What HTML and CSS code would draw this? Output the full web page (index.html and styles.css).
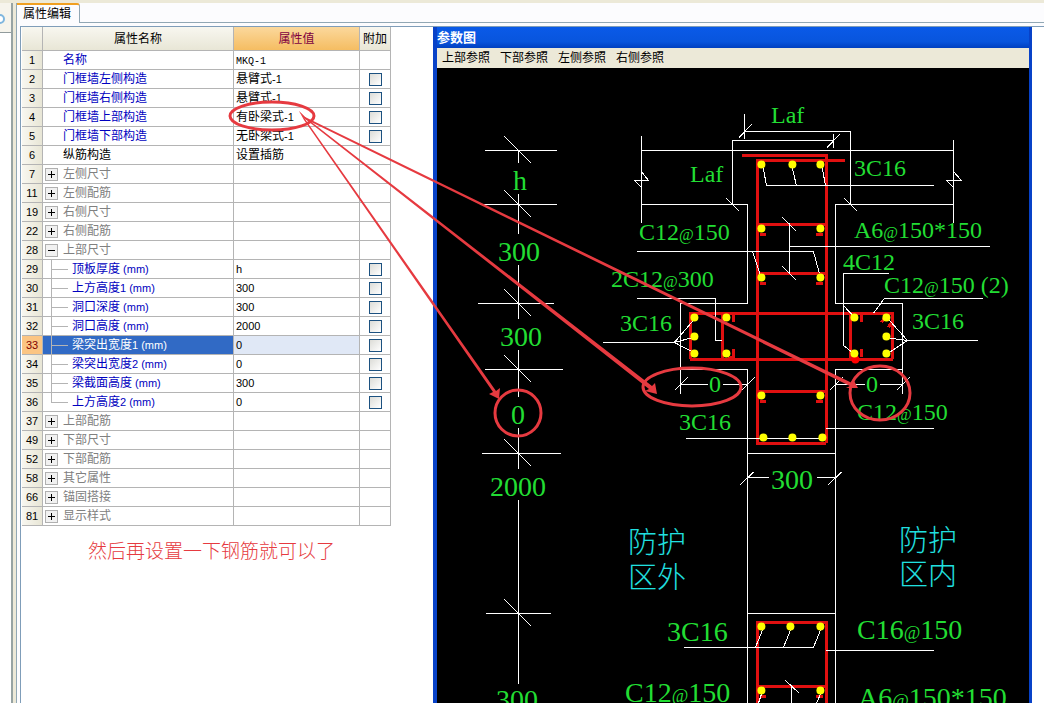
FILE: index.html
```html
<!DOCTYPE html>
<html lang="zh-CN">
<head>
<meta charset="utf-8">
<title>属性编辑</title>
<link rel="stylesheet" href="styles.css">
</head>
<body>
<div class="app">
  <aside class="dock"><div class="dock-bar"><svg class="dock-icon" width="6" height="16" viewBox="0 0 6 16"><circle cx="0" cy="8" r="4" fill="#fff" stroke="#7fb6de" stroke-width="2"/></svg></div></aside>
  <main class="main">
    <nav class="tabs"><button class="tab" type="button">属性编辑</button></nav>
    <div class="work">
      <section class="props">
        <table class="grid">
          <colgroup><col class="c-no"><col class="c-name"><col class="c-value"><col class="c-extra"></colgroup>
          <thead><tr><th></th><th>属性名称</th><th class="active">属性值</th><th>附加</th></tr></thead>
          <tbody>
            <tr><th>1</th><td class="name">名称</td><td><span class="mono">MKQ-1</span></td><td></td></tr>
            <tr><th>2</th><td class="name">门框墙左侧构造</td><td>悬臂式<small>-1</small></td><td><input type="checkbox" aria-label="门框墙左侧构造 附加"></td></tr>
            <tr><th>3</th><td class="name">门框墙右侧构造</td><td>悬臂式<small>-1</small></td><td><input type="checkbox" aria-label="门框墙右侧构造 附加"></td></tr>
            <tr><th>4</th><td class="name">门框墙上部构造</td><td>有卧梁式<small>-1</small></td><td><input type="checkbox" aria-label="门框墙上部构造 附加"></td></tr>
            <tr><th>5</th><td class="name">门框墙下部构造</td><td>无卧梁式<small>-1</small></td><td><input type="checkbox" aria-label="门框墙下部构造 附加"></td></tr>
            <tr><th>6</th><td class="name plain">纵筋构造</td><td>设置插筋</td><td></td></tr>
            <tr><th>7</th><td class="group"><div><button type="button" class="fold" aria-label="展开"></button>左侧尺寸</div></td><td></td><td></td></tr>
            <tr><th>11</th><td class="group"><div><button type="button" class="fold" aria-label="展开"></button>左侧配筋</div></td><td></td><td></td></tr>
            <tr><th>19</th><td class="group"><div><button type="button" class="fold" aria-label="展开"></button>右侧尺寸</div></td><td></td><td></td></tr>
            <tr><th>22</th><td class="group"><div><button type="button" class="fold" aria-label="展开"></button>右侧配筋</div></td><td></td><td></td></tr>
            <tr><th>28</th><td class="group"><div><button type="button" class="fold open" aria-label="收起"></button>上部尺寸</div></td><td></td><td></td></tr>
            <tr><th>29</th><td class="child"><div><i class="branch"></i>顶板厚度<small>&nbsp;(mm)</small></div></td><td><small>h</small></td><td><input type="checkbox" aria-label="顶板厚度 附加"></td></tr>
            <tr><th>30</th><td class="child"><div><i class="branch"></i>上方高度<small>1&nbsp;(mm)</small></div></td><td><small>300</small></td><td><input type="checkbox" aria-label="上方高度1 附加"></td></tr>
            <tr><th>31</th><td class="child"><div><i class="branch"></i>洞口深度<small>&nbsp;(mm)</small></div></td><td><small>300</small></td><td><input type="checkbox" aria-label="洞口深度 附加"></td></tr>
            <tr><th>32</th><td class="child"><div><i class="branch"></i>洞口高度<small>&nbsp;(mm)</small></div></td><td><small>2000</small></td><td><input type="checkbox" aria-label="洞口高度 附加"></td></tr>
            <tr class="selected"><th>33</th><td class="child"><div><i class="branch"></i>梁突出宽度<small>1&nbsp;(mm)</small></div></td><td><small>0</small></td><td><input type="checkbox" aria-label="梁突出宽度1 附加"></td></tr>
            <tr><th>34</th><td class="child"><div><i class="branch"></i>梁突出宽度<small>2&nbsp;(mm)</small></div></td><td><small>0</small></td><td><input type="checkbox" aria-label="梁突出宽度2 附加"></td></tr>
            <tr><th>35</th><td class="child"><div><i class="branch"></i>梁截面高度<small>&nbsp;(mm)</small></div></td><td><small>300</small></td><td><input type="checkbox" aria-label="梁截面高度 附加"></td></tr>
            <tr><th>36</th><td class="child"><div><i class="branch last"></i>上方高度<small>2&nbsp;(mm)</small></div></td><td><small>0</small></td><td><input type="checkbox" aria-label="上方高度2 附加"></td></tr>
            <tr><th>37</th><td class="group"><div><button type="button" class="fold" aria-label="展开"></button>上部配筋</div></td><td></td><td></td></tr>
            <tr><th>49</th><td class="group"><div><button type="button" class="fold" aria-label="展开"></button>下部尺寸</div></td><td></td><td></td></tr>
            <tr><th>52</th><td class="group"><div><button type="button" class="fold" aria-label="展开"></button>下部配筋</div></td><td></td><td></td></tr>
            <tr><th>58</th><td class="group"><div><button type="button" class="fold" aria-label="展开"></button>其它属性</div></td><td></td><td></td></tr>
            <tr><th>66</th><td class="group"><div><button type="button" class="fold" aria-label="展开"></button>锚固搭接</div></td><td></td><td></td></tr>
            <tr><th>81</th><td class="group"><div><button type="button" class="fold" aria-label="展开"></button>显示样式</div></td><td></td><td></td></tr>
          </tbody>
        </table>
        <p class="note">然后再设置一下钢筋就可以了</p>
      </section>
      <section class="dialog">
        <h1 class="dialog-title">参数图</h1>
        <div class="menu"><button type="button">上部参照</button><button type="button">下部参照</button><button type="button">左侧参照</button><button type="button">右侧参照</button></div>
        <div class="canvas">
          <svg width="592" height="635" viewBox="437 68 592 635">
            <g transform="translate(.4 .4)">
            <g class="bar">
              <path d="M742 155H827M758 160H845M757 159V443M826 154V443M756 443H826M757 224H826M757 273H826M757 391H826"/>
              <path d="M760 234H766M816 234H823M760 283H766M816 283H823M760 401H766M816 401H823"/>
              <path d="M690 313H893M690 359H893M690 312V359M892 312V359M722 313V359M850 313V359"/>
              <path d="M733 315V322M733 349V357L728 358M861 315V322M861 349V357M881 322L884 318M888 327L891 322"/>
              <path d="M756 622H828M757 622V703M826 622V703M757 686H826M760 696H766M816 696H823"/>
            </g>
            <circle cx="855" cy="359" r="4" fill="#ff0000"/>
            <g class="line">
              <path d="M485 150H557M518 150V163M504 136L531 163M480 204H557M518 194V234M504 190L531 217M478 303H554M518 265V319M504 289L531 316M485 369H563M518 350V397M504 355L531 382M482 453H561M518 428V469M504 439L531 466M486 613H551M518 500V684M504 599L531 626"/>
              <path d="M641 136V223M641 150H953M641 171L648 180H634L641 187M641 204H747V303H680V394M680 369H747V703M953 140V223M953 171L961 180H946L953 187M953 204H835V303H902V394M902 369H835V703M747 453H835M747 613H835"/>
              <path d="M744 114V139M744 131H850V204M738 138L751 124M844 198L857 211M732 204V140H833M726 198L739 211M833 134V148M826 148L839 134"/>
              <path d="M763 168L766 185H934M792 168L796 185M822 168L825 185M789 246H990M789 223V273M782 217L796 231M782 266L796 280M637 251H813L819 273M752 251L760 275M637 298H715V340H722"/>
              <path d="M603 342H674L693 320M674 342L693 337M674 342L693 352M680 384H708M723 384H748M674 390L687 377M741 390L754 377M686 438H822"/>
              <path d="M889 273H843V345L852 352M843 305L854 317M983 298H884L873 313M978 340H907L889 320M907 340L890 338M907 340L889 352M836 384H865M880 384H902M829 390L842 377M896 390L909 377M826 428H934"/>
              <path d="M747 477H769M817 477H835M740 484L754 471M828 484L842 471M684 647H813L820 630M762 630L755 647M790 630L783 647M826 650H934M785 680L799 693M791 686V703M761 694L758 703M820 694L816 703"/>
            </g>
            <g class="dot">
              <circle cx="761" cy="164" r="4"/><circle cx="792" cy="164" r="4"/><circle cx="820" cy="164" r="4"/>
              <circle cx="761" cy="228" r="4"/><circle cx="820" cy="228" r="4"/><circle cx="761" cy="277" r="4"/><circle cx="820" cy="277" r="4"/>
              <circle cx="761" cy="395" r="4"/><circle cx="820" cy="395" r="4"/><circle cx="763" cy="437" r="4"/><circle cx="792" cy="437" r="4"/><circle cx="822" cy="437" r="4"/>
              <circle cx="694" cy="317" r="4"/><circle cx="694" cy="336" r="4"/><circle cx="694" cy="353" r="4"/><circle cx="726" cy="317" r="4"/><circle cx="726" cy="353" r="4"/>
              <circle cx="854" cy="317" r="4"/><circle cx="854" cy="353" r="4"/><circle cx="886" cy="317" r="4"/><circle cx="886" cy="336" r="4"/><circle cx="886" cy="353" r="4"/>
              <circle cx="761" cy="626" r="4"/><circle cx="790" cy="626" r="4"/><circle cx="820" cy="626" r="4"/><circle cx="761" cy="690" r="4"/><circle cx="820" cy="690" r="4"/>
            </g>
            </g>
            <g class="label">
              <text x="771" y="123">Laf</text><text x="690" y="182">Laf</text><text x="854" y="176">3C16</text>
              <text x="639" y="240">C12<tspan class="at">@</tspan>150</text><text x="854" y="238">A6<tspan class="at">@</tspan>150*150</text>
              <text x="843" y="270">4C12</text><text x="611" y="287">2C12<tspan class="at">@</tspan>300</text><text x="884" y="293">C12<tspan class="at">@</tspan>150 (2)</text>
              <text x="620" y="331">3C16</text><text x="912" y="329">3C16</text><text x="709" y="392">0</text><text x="866" y="392">0</text>
              <text x="679" y="430">3C16</text><text x="857" y="420">C12<tspan class="at">@</tspan>150</text>
            </g>
            <g class="label large">
              <text x="513" y="190">h</text><text x="498" y="261">300</text><text x="500" y="346">300</text><text x="511" y="424">0</text><text x="490" y="496">2000</text><text x="771" y="489">300</text><text x="496" y="709">300</text>
              <text x="667" y="641">3C16</text><text x="857" y="639">C16<tspan class="at">@</tspan>150</text><text x="625" y="702">C12<tspan class="at">@</tspan>150</text><text x="858" y="707">A6<tspan class="at">@</tspan>150*150</text>
            </g>
            <g class="zone"><text x="628" y="553">防护</text><text x="628" y="588">区外</text><text x="899" y="551">防护</text><text x="899" y="585">区内</text></g>
          </svg>
        </div>
      </section>
    </div>
  </main>
</div>
<svg class="markup" width="1044" height="703" viewBox="0 0 1044 703" aria-hidden="true">
  <g fill="none" stroke="#e63a40" stroke-width="3">
    <ellipse cx="272" cy="116" rx="42" ry="14"/>
    <circle cx="518" cy="413" r="23"/>
    <ellipse cx="692" cy="387" rx="49" ry="19"/>
    <ellipse cx="880" cy="393" rx="30" ry="27"/>
  </g>
  <g fill="#e63a40">
    <path d="M299 111L305 119L496 391L500 388L499 399L489 394L493 392L304 120Z"/>
    <path d="M299 111L305 117L652 386L655 383L657 394L645 391L649 389L304 118Z"/>
    <path d="M299 111L305 117L852 383L853 379L858 388L846 388L850 386L305 119Z"/>
  </g>
</svg>
</body>
</html>
```

FILE: styles.css
```css
* { box-sizing: border-box; }
body {
  margin: 0;
  height: 100vh;
  overflow: hidden;
  background: #ece9d8;
  color: #000;
  font: 12px/18px "Liberation Sans", "Noto Sans CJK SC", sans-serif;
}
button { border: 0; padding: 0; background: none; font: inherit; color: inherit; }
.app { display: flex; height: 100%; padding-top: 3px; }
.dock { width: 13px; border-right: 2px solid #97a3a3; background: #fff; }
.dock-bar { height: 30px; border-bottom: 1px solid #919b9c; background: #f6f4ec; }
.dock-icon { display: block; height: 32px; }
.main {
  flex: 1;
  min-width: 0;
  display: flex;
  flex-direction: column;
  margin-left: 3px;
  border-left: 1px solid #91a7b4;
  background: #fcfcfe;
}
.tabs { height: 20px; border-bottom: 1px solid #91a7b4; }
.tab {
  display: block;
  width: 63px;
  height: 20px;
  padding-left: 6px;
  border-top: 2px solid #f0a020;
  border-right: 1px solid #91a7b4;
  border-radius: 0 3px 0 0;
  background: #fcfcfe;
  line-height: 17px;
  text-align: left;
}
.work {
  flex: 1;
  min-height: 0;
  display: flex;
  justify-content: space-between;
  margin: 3px 0 0 3px;
  border: solid #7f9db9;
  border-width: 1px 0 0 1px;
  background: #fff;
}
.props { width: 370px; padding-left: 1px; }
.grid { width: 369px; table-layout: fixed; border-collapse: separate; border-spacing: 0; }
.c-no { width: 21px; }
.c-name { width: 191px; }
.c-value { width: 126px; }
.c-extra { width: 31px; }
.grid th, .grid td {
  height: 19px;
  padding: 0;
  border: solid #b4b4b4;
  border-width: 0 1px 1px 0;
  font-weight: normal;
  text-align: left;
  white-space: nowrap;
  line-height: 18px;
}
.grid thead th {
  height: 24px;
  background: linear-gradient(#f8f7f0, #e8e6d6);
  text-align: center;
}
.grid thead .active { background: linear-gradient(#fbd89c, #f5bd62); color: #800040; }
.grid tbody th {
  background: linear-gradient(90deg, #f8f7f0, #e8e6d6);
  font-size: 11px;
  text-align: center;
}
.grid td:nth-child(3) { padding-left: 2px; }
.grid td:last-child { text-align: center; }
.grid small { font-size: 11px; }
.mono { font: 10px "Liberation Mono", monospace; }
.grid .name { padding-left: 20px; color: #0000c0; }
.grid .plain { color: #000; }
.group div, .child div { display: flex; align-items: center; height: 18px; }
.grid .group { padding-left: 2px; color: #808080; }
.grid .child { padding-left: 8px; color: #0000c0; }
.fold {
  width: 13px;
  height: 13px;
  margin-right: 5px;
  border: 1px solid #b0b0b0;
  background:
    linear-gradient(#000, #000) center / 7px 1px no-repeat,
    linear-gradient(#000, #000) center / 1px 7px no-repeat,
    #f1f1f1;
}
.fold.open { background: linear-gradient(#000, #000) center / 7px 1px no-repeat, #f1f1f1; }
.branch {
  width: 17px;
  height: 19px;
  margin-right: 4px;
  background:
    linear-gradient(#b4b4b4, #b4b4b4) 0 9px / 17px 1px no-repeat,
    linear-gradient(#b4b4b4, #b4b4b4) 0 0 / 1px 19px no-repeat;
}
.branch.last {
  background:
    linear-gradient(#b4b4b4, #b4b4b4) 0 9px / 17px 1px no-repeat,
    linear-gradient(#b4b4b4, #b4b4b4) 0 0 / 1px 9px no-repeat;
}
.grid input {
  appearance: none;
  display: block;
  width: 13px;
  height: 13px;
  margin: 0 auto;
  border: 1px solid #1c5180;
  background: linear-gradient(135deg, #dcdcd7, #fff);
}
.selected th:first-child { background: #fbc583; color: #800000; }
.grid .selected .child { background: #316ac5; color: #fff; }
.selected td:nth-child(3) { background: #e0e8f6; }
.note {
  margin: 12px 0 0 66px;
  color: #e63a40;
  font-size: 19px;
  font-weight: 300;
  line-height: 28px;
  white-space: nowrap;
}
.dialog {
  flex: 1;
  min-width: 0;
  display: flex;
  flex-direction: column;
  margin: 0 12px 0 42px;
  border: solid #0842c8;
  border-width: 0 3px 0 4px;
}
.dialog-title {
  height: 21px;
  margin: 0;
  background: linear-gradient(#0a5ae8, #0855dd 70%, #0040c0);
  color: #fff;
  font-size: 13px;
  line-height: 22px;
}
.menu { display: flex; gap: 10px; height: 20px; padding-left: 5px; background: #ece9d8; }
.canvas { flex: 1; min-height: 0; overflow: hidden; background: #000; }
.canvas svg { display: block; }
.bar { fill: none; stroke: #e01010; stroke-width: 3; shape-rendering: crispEdges; }
.line { fill: none; stroke: #fff; stroke-width: 1; shape-rendering: crispEdges; }
.dot { fill: #ffff00; }
.label { fill: #22dd33; font-family: "Liberation Serif", serif; font-size: 24px; }
.label .at { font-size: 16px; }
.large { font-size: 28px; }
.large .at { font-size: 18px; }
.zone { fill: #20e0e0; font-family: "Noto Sans CJK SC", sans-serif; font-size: 29px; font-weight: 300; }
.markup { position: absolute; top: 0; left: 0; pointer-events: none; }
```
